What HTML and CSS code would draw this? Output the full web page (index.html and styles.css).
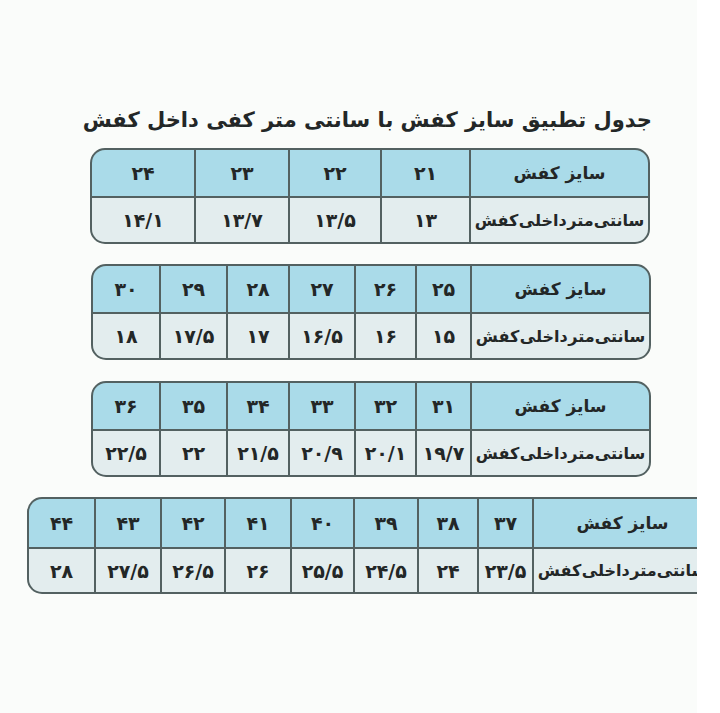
FILE: index.html
```html
<!DOCTYPE html>
<html lang="fa">
<head>
<meta charset="utf-8">
<link rel="stylesheet" href="styles.css">
</head>
<body>
<div class="sheet">
  <div class="title">جدول تطبیق سایز کفش با سانتی متر کفی داخل کفش</div>

  <div class="tbl t1">
    <div class="c h lbl">سایز کفش</div>
    <div class="c h">۲۱</div>
    <div class="c h">۲۲</div>
    <div class="c h">۲۳</div>
    <div class="c h">۲۴</div>
    <div class="c b lbl2">سانتی‌متر داخلی کفش</div>
    <div class="c b">۱۳</div>
    <div class="c b">۱۳/۵</div>
    <div class="c b">۱۳/۷</div>
    <div class="c b">۱۴/۱</div>
  </div>

  <div class="tbl t2">
    <div class="c h lbl">سایز کفش</div>
    <div class="c h">۲۵</div>
    <div class="c h">۲۶</div>
    <div class="c h">۲۷</div>
    <div class="c h">۲۸</div>
    <div class="c h">۲۹</div>
    <div class="c h">۳۰</div>
    <div class="c b lbl2">سانتی‌متر داخلی کفش</div>
    <div class="c b">۱۵</div>
    <div class="c b">۱۶</div>
    <div class="c b">۱۶/۵</div>
    <div class="c b">۱۷</div>
    <div class="c b">۱۷/۵</div>
    <div class="c b">۱۸</div>
  </div>

  <div class="tbl t3">
    <div class="c h lbl">سایز کفش</div>
    <div class="c h">۳۱</div>
    <div class="c h">۳۲</div>
    <div class="c h">۳۳</div>
    <div class="c h">۳۴</div>
    <div class="c h">۳۵</div>
    <div class="c h">۳۶</div>
    <div class="c b lbl2">سانتی‌متر داخلی کفش</div>
    <div class="c b">۱۹/۷</div>
    <div class="c b">۲۰/۱</div>
    <div class="c b">۲۰/۹</div>
    <div class="c b">۲۱/۵</div>
    <div class="c b">۲۲</div>
    <div class="c b">۲۲/۵</div>
  </div>

  <div class="tbl t4">
    <div class="c h lbl">سایز کفش</div>
    <div class="c h">۳۷</div>
    <div class="c h">۳۸</div>
    <div class="c h">۳۹</div>
    <div class="c h">۴۰</div>
    <div class="c h">۴۱</div>
    <div class="c h">۴۲</div>
    <div class="c h">۴۳</div>
    <div class="c h">۴۴</div>
    <div class="c b lbl2">سانتی‌متر داخلی کفش</div>
    <div class="c b">۲۳/۵</div>
    <div class="c b">۲۴</div>
    <div class="c b">۲۴/۵</div>
    <div class="c b">۲۵/۵</div>
    <div class="c b">۲۶</div>
    <div class="c b">۲۶/۵</div>
    <div class="c b">۲۷/۵</div>
    <div class="c b">۲۸</div>
  </div>
</div>
</body>
</html>
```

FILE: styles.css
```css
html, body {
  margin: 0;
  padding: 0;
  background: #ffffff;
}

.sheet {
  width: 697px;
  height: 713px;
  overflow: hidden;
  background: #fafcfa;
  padding-top: 100px;
  box-sizing: border-box;
  font-family: "DejaVu Sans", sans-serif;
  color: #232727;
}

.title {
  direction: rtl;
  width: 562px;
  margin-left: 90px;
  text-align: right;
  font-size: 21px;
  font-weight: bold;
  line-height: 40px;
  height: 40px;
  margin-bottom: 8px;
  white-space: nowrap;
}

.tbl {
  direction: rtl;
  display: grid;
  gap: 2px;
  background: #536161;
  border: 2px solid #536161;
  border-radius: 15px;
  overflow: hidden;
  box-sizing: border-box;
  height: 96px;
  grid-template-rows: 46px 44px;
}

.t1 {
  width: 560px;
  margin-left: 90px;
  grid-template-columns: 177px 87px 90px 92px 1fr;
  margin-bottom: 20px;
}

.t2, .t3 {
  width: 560px;
  margin-left: 91px;
  grid-template-columns: 177px 53px 59px 64px 60px 65px 1fr;
}

.t2 { margin-bottom: 21px; }
.t3 { margin-bottom: 20px; }

.t4 {
  width: 686px;
  margin-left: 27px;
  height: 97px;
  grid-template-rows: 48px 43px;
  grid-template-columns: 177px 53px 58px 62px 61px 64px 62px 64px 1fr;
}

.c {
  display: flex;
  align-items: center;
  justify-content: center;
  font-weight: bold;
  font-size: 19px;
  white-space: nowrap;
}

.h { background: #aadbe9; }
.b { background: #e3edee; }

.lbl {
  font-size: 17px;
}

.lbl2 {
  font-size: 16px;
  word-spacing: -5px;
  letter-spacing: -0.3px;
}
```
